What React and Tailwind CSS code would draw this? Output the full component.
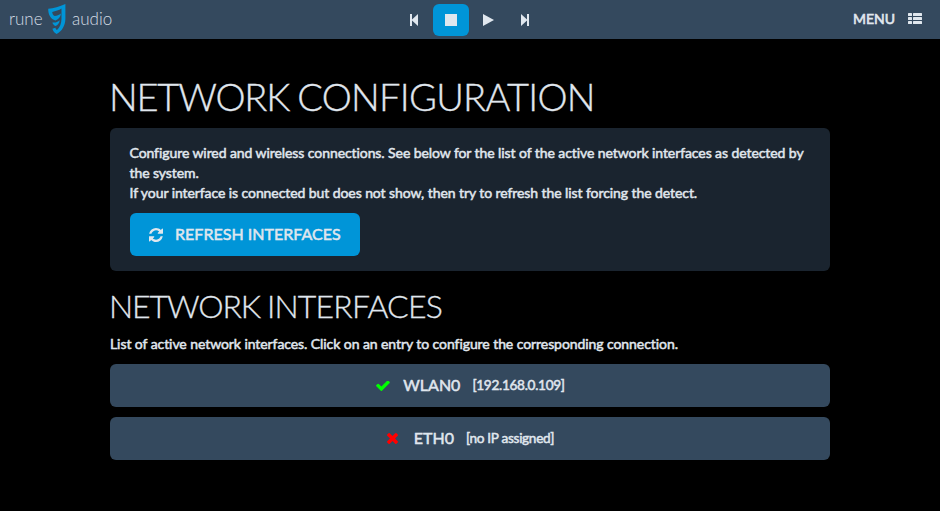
function Check() {
  return (
    <svg viewBox="121 398 1550 1124" className="h-[10px] w-[14px] fill-[#00ff00]">
      <path d="M1671 566q0 40-28 68l-724 724-136 136q-28 28-68 28t-68-28l-136-136-362-362q-28-28-28-68t28-68l136-136q28-28 68-28t68 28l294 295 656-657q28-28 68-28t68 28l136 136q28 28 28 68z" />
    </svg>
  );
}

function Cross() {
  return (
    <svg viewBox="302 366 1188 1188" className="size-[11px] fill-[#ff0000]">
      <path d="M1490 1322q0 40-28 68l-136 136q-28 28-68 28t-68-28l-294-294-294 294q-28 28-68 28t-68-28l-136-136q-28-28-28-68t28-68l294-294-294-294q-28-28-28-68t28-68l136-136q28-28 68-28t68 28l294 294 294-294q28-28 68-28t68 28l136 136q28 28 28 68t-28 68l-294 294 294 294q28 28 28 68z" />
    </svg>
  );
}

function Refresh() {
  return (
    <svg viewBox="0 0 1536 1536" className="size-[14px] fill-current">
      <path d="M1511 928q0 5-1 7-64 268-268 434.5t-478 166.5q-146 0-282.5-55t-243.5-157l-129 129q-19 19-45 19t-45-19-19-45v-448q0-26 19-45t45-19h448q26 0 45 19t19 45-19 45l-137 137q71 66 161 102t187 36q134 0 250-65t186-179q11-17 53-117 8-23 30-23h192q13 0 22.5 9.5t9.5 22.5zm25-800v448q0 26-19 45t-45 19h-448q-26 0-45-19t-19-45 19-45l138-138q-148-137-349-137-134 0-250 65t-186 179q-11 17-53 117-8 23-30 23h-199q-13 0-22.5-9.5t-9.5-22.5v-7q65-268 270-434.5t480-166.5q146 0 284 55.5t245 156.5l130-129q19-19 45-19t45 19 19 45z" />
    </svg>
  );
}

function Logo() {
  return (
    <div className="flex h-full w-[130px] items-start pl-[9px] text-[17px] leading-[38px] font-light text-[#d5dde5]">
      <span className="w-[33px]">rune</span>
      <svg viewBox="0 0 18 30" className="mt-1 ml-[6px] h-[30px] w-[18px] shrink-0">
        <path fill="#0095d8" d="M0.2 4.8C5.5 4.3 11.5 2.8 17.4 0V15C17.1 21.5 14.3 27 8.6 30C6.5 29 5.2 27.2 4.4 24.8L7.4 23.8C7.8 25.2 8.4 25.8 9 26C12 23.4 13.3 19.5 13.5 15V4.6C11 6.3 7.5 7.4 4.2 7.9C4.3 9.7 5.2 11.3 6.8 12C9 11.9 11 11.1 13 9.6C12.6 13 10.2 15.6 7.4 16.4C2.6 15.2 0.2 10.8 0.2 4.8ZM4.4 18.4C7.5 18.8 9.5 18 11.8 16.2C11.2 19.4 9.6 21.4 7.6 22C5.8 21.2 4.9 20 4.4 18.4Z" />
      </svg>
      <span className="ml-[6px]">audio</span>
    </div>
  );
}

function Interface({ icon, name, detail }) {
  return (
    <button className="flex h-[43px] w-full items-center justify-center rounded-md bg-[#34495e]">
      <span className="flex w-4 pl-px">{icon}</span>
      <span className="ml-3 pb-[2px] text-[16px] leading-[22px] [-webkit-text-stroke:0.5px]">{name}</span>
      <span className="ml-[12px] text-[13.6px] tracking-[-0.3px] [-webkit-text-stroke:0.5px]">{detail}</span>
    </button>
  );
}

export default function App() {
  return (
    <div className="h-[511px] w-[940px] overflow-hidden bg-black font-[Lato,sans-serif] text-[15px] text-[#e0e7ee]">
      <header className="grid h-[39px] grid-cols-3 bg-[#34495e]">
        <Logo />
        <div className="flex items-start justify-center pt-1 pr-[2px]">
          <button className="flex h-8 w-[38px] items-center justify-center">
            <svg viewBox="0 0 8 12" className="h-3 w-2 fill-current"><path d="M0 0h2v5.5L8 0v12L2 6.5V12H0z" /></svg>
          </button>
          <button className="flex h-8 w-9 items-center justify-center rounded-md bg-[#0095d8]">
            <span className="size-3 bg-current" />
          </button>
          <button className="flex h-8 w-[38px] items-center justify-center pl-px">
            <svg viewBox="0 0 11 12" className="h-3 w-[11px] fill-current"><path d="M0 0L11 6L0 12z" /></svg>
          </button>
          <button className="flex h-8 w-9 items-center justify-center">
            <svg viewBox="0 0 8 12" className="h-3 w-2 fill-current"><path d="M0 0L6 5.5V0h2v12H6V6.5L0 12z" /></svg>
          </button>
        </div>
        <div className="flex items-start justify-end pr-[18px]">
          <span className="text-[14px] leading-[38px] [-webkit-text-stroke:0.6px]">MENU</span>
          <svg viewBox="0 0 14 11" className="mt-[13px] ml-[13px] h-[11px] w-[14px] fill-current">
            <rect width="4" height="3" rx=".5" /><rect x="5" width="9" height="3" rx=".5" />
            <rect y="4" width="4" height="3" rx=".5" /><rect x="5" y="4" width="9" height="3" rx=".5" />
            <rect y="8" width="4" height="3" rx=".5" /><rect x="5" y="8" width="9" height="3" rx=".5" />
          </svg>
        </div>
      </header>
      <main className="mx-auto w-[720px] pt-[36px]">
        <h1 className="-ml-px h-[53px] text-[38px] leading-[42px] font-light tracking-[-0.72px] whitespace-nowrap [-webkit-text-stroke:0.35px]">
          <span className="tracking-[-1.2px]">NETWORK</span>
          <span className="[word-spacing:-1.5px]"> CONFIGURATION</span>
        </h1>
        <section className="h-[143px] rounded-md bg-[#1a242f] px-[19.5px] pt-[15px]">
          <p className="text-[14px] leading-5 tracking-[-0.077px] whitespace-nowrap [-webkit-text-stroke:0.5px]">
            Configure wired and wireless connections. See below for the list of the active network interfaces as detected by<br />
            the system.<br />
            If your interface is connected but does not show, then try to refresh the list forcing the detect.
          </p>
          <button className="mt-[10px] ml-[0.5px] flex h-[43px] w-[230px] items-center rounded-md bg-[#0095d8] pl-[19px] text-[16px] whitespace-nowrap">
            <Refresh />
            <span className="ml-3 pb-[2px] tracking-[0.03px] [-webkit-text-stroke:0.5px]">REFRESH INTERFACES</span>
          </button>
        </section>
        <h2 className="-ml-px mt-[17px] h-[46px] text-[32px] leading-[36px] font-light tracking-[-0.8px] whitespace-nowrap [-webkit-text-stroke:0.3px]">
          <span className="tracking-[-1.1px]">NETWORK</span>
          <span className="[word-spacing:-1px]"> INTERFACES</span>
        </h2>
        <p className="text-[14px] leading-5 tracking-[-0.072px] whitespace-nowrap [-webkit-text-stroke:0.5px]">List of active network interfaces. Click on an entry to configure the corresponding connection.</p>
        <div className="mt-[10px] flex flex-col gap-[10px]">
          <Interface icon={<Check />} name="WLAN0" detail="[192.168.0.109]" />
          <Interface icon={<Cross />} name="ETH0" detail="[no IP assigned]" />
        </div>
      </main>
    </div>
  );
}
